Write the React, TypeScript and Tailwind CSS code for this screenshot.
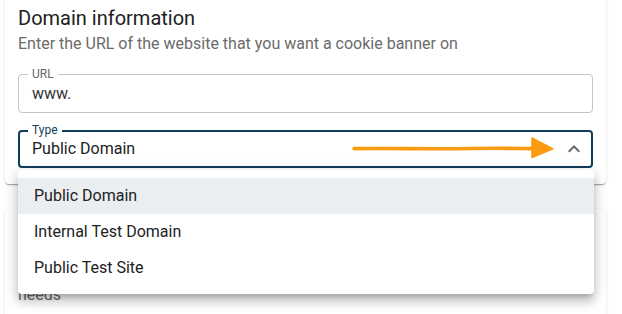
import { useState } from 'react';

const opcoes = ['Public Domain', 'Internal Test Domain', 'Public Test Site'];

const ChevronUp = () => (
  <svg viewBox="0 0 24 24" className="w-6 h-6 fill-[#666]">
    <path d="M12 8l-6 6 1.41 1.41L12 10.83l4.59 4.58L18 14z" />
  </svg>
);

// the hand-drawn orange arrow over the field
const SetaLaranja = () => (
  <svg viewBox="0 0 204 26" className="w-[204px] h-[26px]" fill="none">
    <path
      d="M2 12.6 C 40 12.1, 80 13.2, 120 12.5 S 170 12.9, 182 12.6"
      stroke="#fb9b12"
      strokeWidth="3.6"
      strokeLinecap="round"
    />
    <path d="M180 2 L201 12.8 L180 21.5 Z" fill="#fb9b12" stroke="#fb9b12" strokeWidth="1.5" strokeLinejoin="round" />
  </svg>
);

export default function App() {
  const [selecionado] = useState('Public Domain');

  return (
    <div className="relative h-[314px] w-[622px] overflow-hidden bg-white font-['Roboto',_'Liberation_Sans',_sans-serif]">
      <div className="px-[5px] pr-[16px]">
        <div className="-mt-[8px] rounded-[4px] bg-white px-[13px] pt-[12px] pb-[16px] shadow-[0_2px_1px_-1px_rgba(0,0,0,0.2),0_1px_1px_0_rgba(0,0,0,0.14),0_1px_3px_0_rgba(0,0,0,0.12)]">
          <h2 className="text-[20px] leading-[28px] text-[#212121]">Domain information</h2>
          <p className="text-[16px] leading-[24px] text-[#6b6b6b]">
            Enter the URL of the website that you want a cookie banner on
          </p>

          <div className="relative mt-[18px] flex h-[39px] items-center rounded-[4px] border border-[#c4c4c4] px-[13px]">
            <span className="absolute -top-[8px] left-[9px] bg-white px-[4px] text-[12px] leading-[14px] text-[#666]">URL</span>
            <span className="text-[16px] text-[#333]">www.</span>
          </div>

          <div className="relative mt-[17px] flex h-[38px] items-center rounded-[4px] border-2 border-[#0f3d5c] pl-[12px] pr-[5px]">
            <span className="absolute -top-[9px] left-[8px] bg-white px-[4px] text-[12px] leading-[14px] text-[#0f3d5c]">Type</span>
            <span className="flex-1 text-[16px] text-[#222]">{selecionado}</span>
            <div className="mr-[6px]">
              <SetaLaranja />
            </div>
            <ChevronUp />
          </div>
        </div>

        <div className="mt-[25px] h-[200px] rounded-[4px] bg-white px-[13px] pt-[50px] shadow-[0_2px_1px_-1px_rgba(0,0,0,0.2),0_1px_1px_0_rgba(0,0,0,0.14),0_1px_3px_0_rgba(0,0,0,0.12)]">
          <p className="text-[16px] leading-[24px] text-[#6b6b6b]">
            Choose the banner layout that best fits your website's
            <br />
            needs
          </p>
        </div>
      </div>

      <ul className="absolute left-[18px] top-[170px] w-[576px] rounded-[4px] bg-white py-[8px] shadow-[0_5px_5px_-3px_rgba(0,0,0,0.2),0_8px_10px_1px_rgba(0,0,0,0.14),0_3px_14px_2px_rgba(0,0,0,0.12)]">
        {opcoes.map(opcao => (
          <li
            key={opcao}
            className={`flex h-[36px] items-center px-[16px] text-[16px] text-[#222] ${opcao === selecionado ? 'bg-[#ebeef1]' : ''}`}
          >
            {opcao}
          </li>
        ))}
      </ul>
    </div>
  );
}
